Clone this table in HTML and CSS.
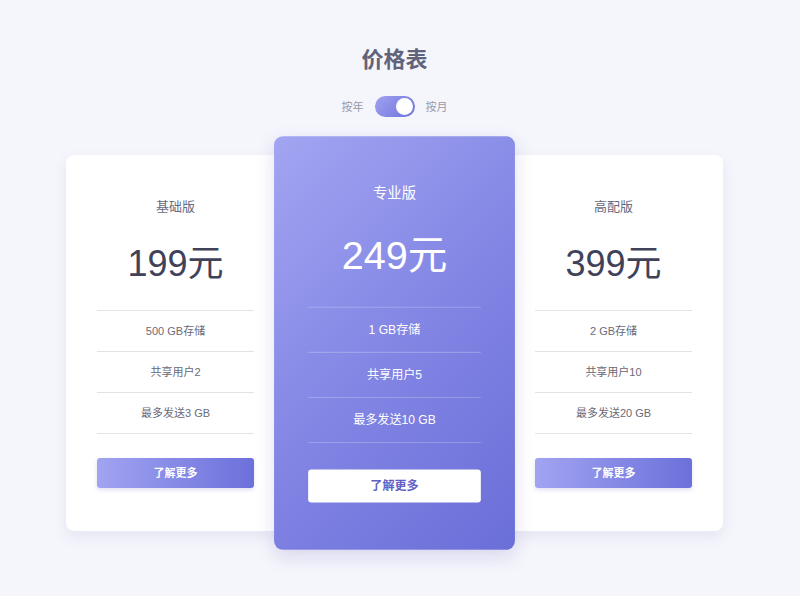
FILE: index.html
```html
<!DOCTYPE html>
<html lang="zh">
<head>
<meta charset="utf-8">
<link rel="stylesheet" href="styles.css">
</head>
<body>
<main class="page">
  <h1 class="title">价格表</h1>
  <div class="switcher">
    <span class="switch-label">按年</span>
    <span class="toggle"><span class="knob"></span></span>
    <span class="switch-label">按月</span>
  </div>
  <div class="cards">
    <section class="card">
      <h3 class="plan">基础版</h3>
      <div class="price">199元</div>
      <ul class="features">
        <li>500 GB存储</li>
        <li>共享用户2</li>
        <li>最多发送3 GB</li>
      </ul>
      <a class="btn">了解更多</a>
    </section>
    <section class="card card-active">
      <h3 class="plan">专业版</h3>
      <div class="price">249元</div>
      <ul class="features">
        <li>1 GB存储</li>
        <li>共享用户5</li>
        <li>最多发送10 GB</li>
      </ul>
      <a class="btn">了解更多</a>
    </section>
    <section class="card">
      <h3 class="plan">高配版</h3>
      <div class="price">399元</div>
      <ul class="features">
        <li>2 GB存储</li>
        <li>共享用户10</li>
        <li>最多发送20 GB</li>
      </ul>
      <a class="btn">了解更多</a>
    </section>
  </div>
</main>
</body>
</html>
```
FILE: styles.css
```css
* { box-sizing: border-box; }
html, body {
  margin: 0;
  padding: 0;
  background: #f5f5fc;
  font-family: "Liberation Sans", Arial, "Noto Sans CJK SC", sans-serif;
}
.page {
  width: 800px;
  height: 596px;
  padding: 45px 11px 0 0;
  display: flex;
  flex-direction: column;
  align-items: center;
}
.title {
  margin: 0;
  font-size: 22px;
  line-height: 30px;
  font-weight: bold;
  color: #606379;
}
.switcher {
  margin-top: 20px;
  display: flex;
  align-items: center;
  gap: 11px;
  height: 22px;
}
.switch-label {
  font-size: 11px;
  color: #9a9aa8;
}
.toggle {
  width: 40px;
  height: 21px;
  border-radius: 11px;
  background: linear-gradient(135deg, #9fa2ef, #6e72dc);
  display: flex;
  justify-content: flex-end;
  align-items: center;
  padding: 0 2px;
}
.knob {
  width: 17px;
  height: 17px;
  border-radius: 50%;
  background: #fff;
}
.cards {
  margin-top: 38px;
  display: flex;
  align-items: center;
}
.card {
  width: 219px;
  height: 376px;
  background: #fff;
  border-radius: 8px;
  box-shadow: 0 6px 14px rgba(120, 120, 170, 0.12);
  padding: 44px 31px 0;
  display: flex;
  flex-direction: column;
  align-items: stretch;
  text-align: center;
}
.card-active {
  transform: scale(1.1);
  position: relative;
  z-index: 2;
  background: linear-gradient(135deg, #a2a5f1 0%, #8386e4 50%, #6a6ed8 100%);
  box-shadow: 0 6px 16px rgba(100, 100, 180, 0.2);
  color: #fff;
}
.plan {
  margin: 0;
  font-size: 13px;
  line-height: 16px;
  font-weight: normal;
  color: #6a6a80;
}
.price {
  margin-top: 26px;
  font-size: 36px;
  line-height: 46px;
  color: #40425a;
}
.features {
  list-style: none;
  margin: 23px 0 0;
  padding: 0;
  border-top: 1px solid #e2e2e8;
}
.features li {
  height: 41px;
  line-height: 40px;
  border-bottom: 1px solid #e2e2e8;
  font-size: 11px;
  color: #6a6a78;
}
.btn {
  margin-top: 24px;
  height: 30px;
  line-height: 30px;
  border-radius: 3px;
  background: linear-gradient(90deg, #a1a4f1, #6c70da);
  box-shadow: 0 2px 4px rgba(100, 100, 180, 0.2);
  color: #fff;
  font-size: 11px;
  font-weight: bold;
}
.card-active .plan,
.card-active .price,
.card-active .features li { color: #fff; }
.card-active .features,
.card-active .features li { border-color: rgba(255, 255, 255, 0.22); }
.card-active .btn {
  background: #fff;
  color: #5f62c4;
  box-shadow: none;
}
```
